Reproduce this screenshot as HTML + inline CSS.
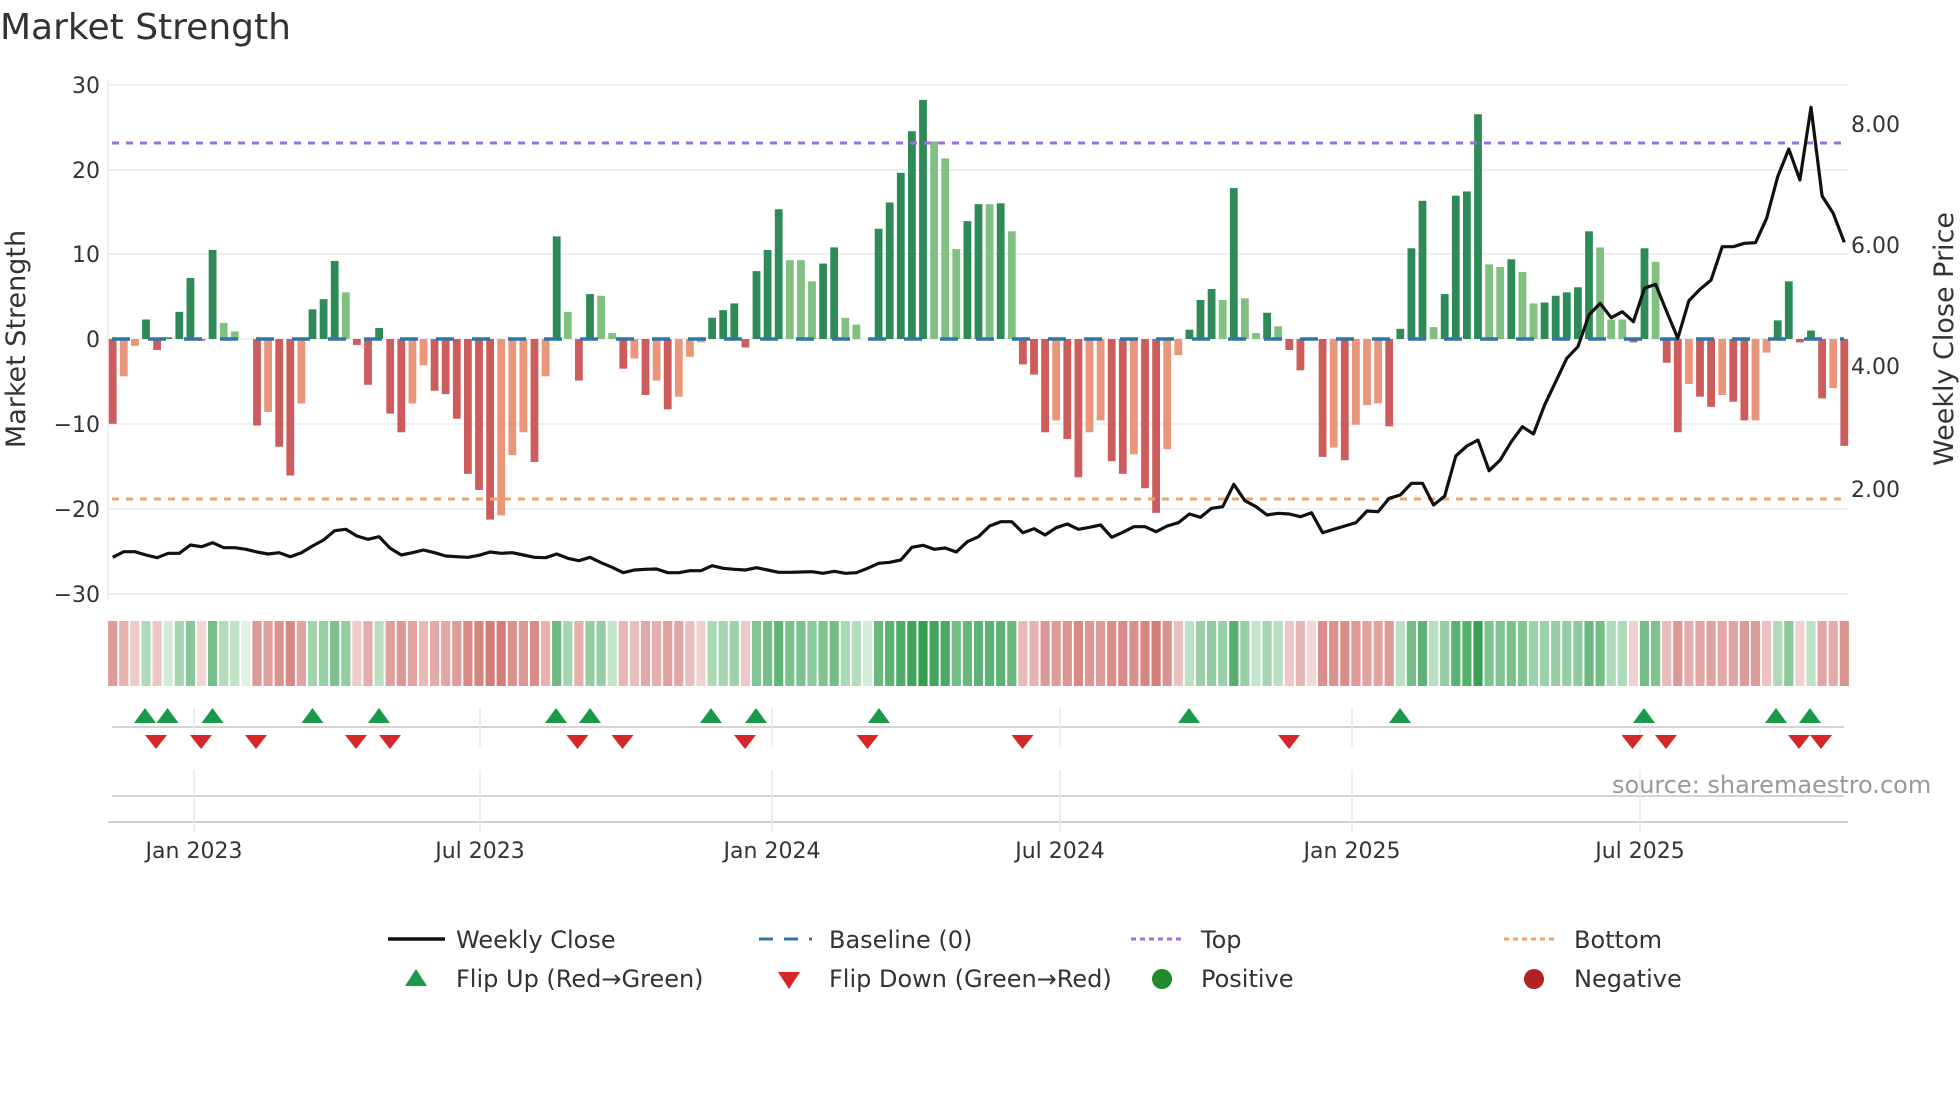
<!DOCTYPE html>
<html><head><meta charset="utf-8"><style>
html,body{margin:0;padding:0;background:#fff;width:1960px;height:1102px;overflow:hidden}
svg text{font-family:"DejaVu Sans","Liberation Sans",sans-serif;fill:#333}
</style></head><body>
<svg id="s" width="1960" height="1102" xmlns="http://www.w3.org/2000/svg">
<text x="0" y="39" font-size="36" fill="#333">Market Strength</text>
<g font-size="22" text-anchor="end">
<text x="100" y="93">30</text><text x="100" y="178">20</text><text x="100" y="262">10</text><text x="100" y="347">0</text>
<text x="100" y="432">−10</text><text x="100" y="517">−20</text><text x="100" y="602">−30</text>
</g>
<g font-size="22">
<text x="1851" y="132">8.00</text><text x="1851" y="253">6.00</text><text x="1851" y="374">4.00</text><text x="1851" y="497">2.00</text>
</g>
<text transform="translate(25,339) rotate(-90)" font-size="27" text-anchor="middle">Market Strength</text>
<text transform="translate(1953,339) rotate(-90)" font-size="27" text-anchor="middle">Weekly Close Price</text>
<g id="grid" stroke="#eef0f3" stroke-width="2"></g>
<g id="bars"></g>
<line x1="112" y1="143" x2="1844" y2="143" stroke="#9b6fde" stroke-width="3" stroke-dasharray="7 7"/>
<line x1="112" y1="499" x2="1844" y2="499" stroke="#f0a46a" stroke-width="3" stroke-dasharray="7 7"/>
<line x1="112" y1="339" x2="1844" y2="339" stroke="#2f76a8" stroke-width="3.5" stroke-dasharray="18 18"/>
<polyline id="price" fill="none" stroke="#111" stroke-width="3.2" stroke-linejoin="round"/>
<g id="heat"></g>
<g id="marks"></g>
<text x="1612" y="793" font-size="24" fill="#999" style="fill:#999">source: sharemaestro.com</text>
<g font-size="22" text-anchor="middle">
<text x="194" y="858">Jan 2023</text><text x="480" y="858">Jul 2023</text><text x="772" y="858">Jan 2024</text>
<text x="1060" y="858">Jul 2024</text><text x="1352" y="858">Jan 2025</text><text x="1640" y="858">Jul 2025</text>
</g>
<g font-size="24">
<line x1="388" y1="939" x2="445" y2="939" stroke="#111" stroke-width="3.5"/>
<text x="456" y="948">Weekly Close</text>
<line x1="759" y1="939" x2="812" y2="939" stroke="#2f76a8" stroke-width="3" stroke-dasharray="14 11"/>
<text x="829" y="948">Baseline (0)</text>
<line x1="1131" y1="939" x2="1185" y2="939" stroke="#9b6fde" stroke-width="3" stroke-dasharray="5 4"/>
<text x="1201" y="948">Top</text>
<line x1="1504" y1="939" x2="1557" y2="939" stroke="#f0a46a" stroke-width="3" stroke-dasharray="5 4"/>
<text x="1574" y="948">Bottom</text>
<polygon points="416,969 427,986 405,986" fill="#1a9a48"/>
<text x="456" y="987">Flip Up (Red→Green)</text>
<polygon points="778,972 800,972 789,989" fill="#d62728"/>
<text x="829" y="987">Flip Down (Green→Red)</text>
<circle cx="1162" cy="979" r="10" fill="#218a2c"/>
<text x="1201" y="987">Positive</text>
<circle cx="1534" cy="979" r="10" fill="#b22222"/>
<text x="1574" y="987">Negative</text>
</g>
</svg>
<script>
var NS="http://www.w3.org/2000/svg";
function el(p,t,a){var e=document.createElementNS(NS,t);for(var k in a)e.setAttribute(k,a[k]);p.appendChild(e);return e;}
var v=[-10,-4.4,-0.8,2.3,-1.3,0.2,3.2,7.2,-0.2,10.5,1.9,0.9,0,-10.2,-8.6,-12.7,-16.1,-7.6,3.5,4.7,9.2,5.5,-0.7,-5.4,1.3,-8.8,-11,-7.6,-3.1,-6.1,-6.5,-9.4,-15.9,-17.8,-21.3,-20.8,-13.7,-11,-14.5,-4.4,
12.1,3.2,-4.9,5.3,5.1,0.7,-3.5,-2.3,-6.6,-4.9,-8.3,-6.8,-2.1,-0.4,2.5,3.4,4.2,-1,8,10.5,15.3,9.3,9.3,6.8,8.9,10.8,2.5,1.7,0.1,13,16.1,19.6,24.5,28.2,23.3,21.3,10.6,13.9,15.9,15.9,
16,12.7,-3,-4.2,-11,-9.6,-11.8,-16.3,-11,-9.6,-14.4,-15.9,-13.6,-17.6,-20.5,-13,-1.9,1.1,4.6,5.9,4.6,17.8,4.8,0.7,3.1,1.5,-1.3,-3.7,-0.1,-13.9,-12.8,-14.3,-10.1,-7.8,-7.6,-10.3,1.2,10.7,16.3,
1.4,5.3,16.9,17.4,26.5,8.8,8.5,9.4,7.9,4.2,4.3,5.1,5.5,6.1,12.7,10.8,2.3,2.3,-0.4,10.7,9.1,-2.8,-11,-5.3,-6.8,-8,-6.6,-7.4,-9.6,-9.6,-1.6,2.2,6.8,-0.4,1,-7,-5.8,-12.6];
var py=[1432,1415,1415,1425,1433,1420,1420,1395,1400,1388,1403,1403,1408,1416,1422,1418,1430,1418,1398,1380,1352,1348,1368,1378,1370,1405,1425,1418,1410,1418,1428,1430,1432,1426,1416,1420,1418,1425,1432,1433,
1422,1435,1442,1432,1448,1462,1478,1470,1468,1467,1478,1478,1472,1472,1457,1465,1468,1470,1463,1470,1477,1477,1476,1475,1480,1474,1480,1478,1465,1450,1447,1440,1402,1396,1408,1404,1416,1385,1370,1338,
1325,1325,1358,1346,1365,1343,1332,1348,1342,1335,1372,1357,1340,1340,1355,1338,1328,1302,1312,1285,1280,1213,1262,1280,1305,1300,1302,1310,1298,1358,1348,1338,1328,1293,1295,1255,1245,1210,1210,
1275,1248,1128,1098,1080,1172,1140,1085,1040,1062,975,905,835,800,705,670,713,695,725,625,613,695,775,662,628,600,500,500,490,488,415,290,207,300,82,348,400,487];
var g=document.getElementById('grid');
[85,170,254,339,424,509,594].forEach(function(y){el(g,'line',{x1:108,y1:y,x2:1848,y2:y});});
el(g,'line',{x1:108,y1:80,x2:108,y2:600});
var b=document.getElementById('bars'),h=document.getElementById('heat'),pts=[];
function mix(a,c,t){return 'rgb('+[0,1,2].map(function(i){return Math.round(a[i]+(c[i]-a[i])*t)}).join(',')+')';}
for(var i=0;i<v.length;i++){
 var x=112.7+11.1*i,val=v[i],prev=i?v[i-1]:0,col;
 if(val>=0)col=(val>prev)?'#2e8b57':'#80c080';else col=(val<prev||i==0)?'#cd5c5c':'#e9967a';
 var y0=339,y1=339-val*8.48;
 if(Math.abs(val)>0.15)el(b,'rect',{x:x-3.9,y:Math.min(y0,y1),width:7.8,height:Math.abs(y1-y0),fill:col});
 var t=Math.min(Math.sqrt(Math.abs(val)/28),1);
 var hc=val>=0?mix([222,242,226],[52,158,80],t):mix([245,222,222],[206,110,105],t);
 el(h,'rect',{x:x-4.6,y:621,width:9.2,height:65,fill:hc});
 pts.push(x.toFixed(1)+','+(80+py[i]/3).toFixed(1));
}
document.getElementById('price').setAttribute('points',pts.join(' '));
var m=document.getElementById('marks');
el(m,'line',{x1:112,y1:727,x2:1844,y2:727,stroke:'#d4d4d8','stroke-width':2});
el(m,'line',{x1:112,y1:796,x2:1844,y2:796,stroke:'#d4d4d8','stroke-width':2});
el(m,'line',{x1:108,y1:822,x2:1848,y2:822,stroke:'#d0d0d4','stroke-width':2});
[194,480,772,1060,1352,1640].forEach(function(x){
 el(m,'line',{x1:x,y1:708,x2:x,y2:747,stroke:'#e6e8ee','stroke-width':1.5});
 el(m,'line',{x1:x,y1:770,x2:x,y2:832,stroke:'#e6e8ee','stroke-width':1.5});
});
[145,167.5,212.5,312.5,379,556,590,711,756,879,1189,1400,1644,1776,1810].forEach(function(x){
 el(m,'polygon',{points:x+',708 '+(x+11)+',723 '+(x-11)+',723',fill:'#1a9a48'});});
[156,201,256,356,390,577.5,622.5,745,867.5,1022.5,1289,1632.5,1666,1799,1821].forEach(function(x){
 el(m,'polygon',{points:(x-11)+',735 '+(x+11)+',735 '+x+',749',fill:'#d62728'});});
</script>
</body></html>
